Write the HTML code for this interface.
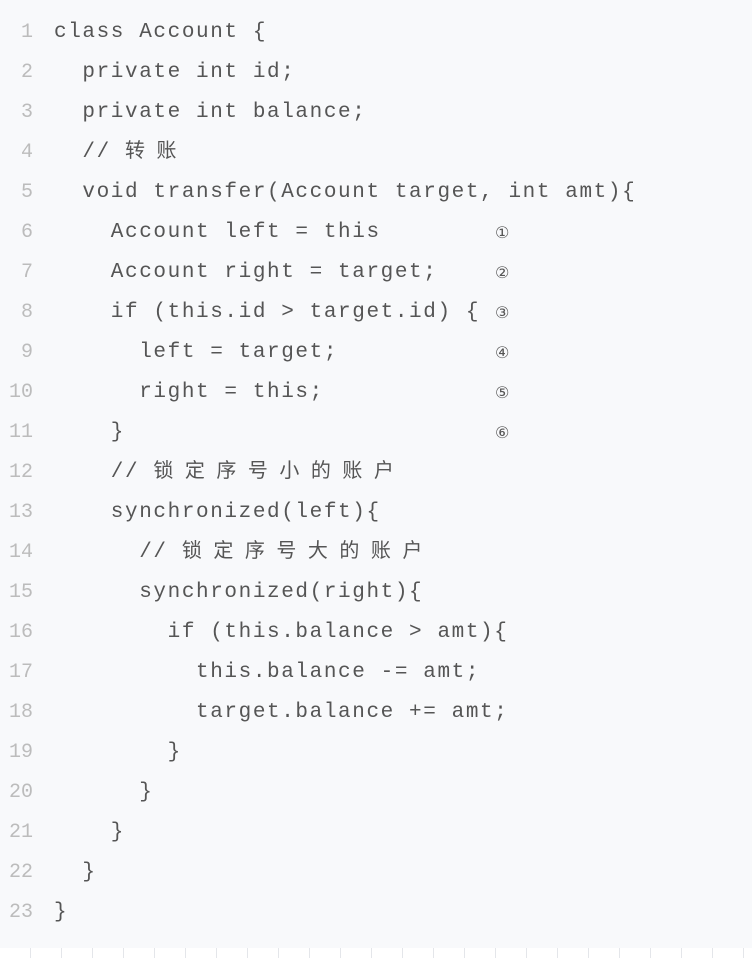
<!DOCTYPE html>
<html><head><meta charset="utf-8"><style>
html,body{margin:0;padding:0;width:752px;height:958px;overflow:hidden;background:#fff}
.box{position:absolute;left:0;top:0;width:752px;height:948px;background:#f8f9fb}
.ticks{position:absolute;left:0;top:948px;width:752px;height:10px;background:#fff;
background-image:repeating-linear-gradient(90deg,transparent 0,transparent 30px,#e4e6ea 30px,#e4e6ea 31px);}
.ln{position:absolute;left:0;width:33px;height:40px;line-height:40px;text-align:right;font:20px/40px "Liberation Mono",monospace;color:#bcbcbc;}
.c{position:absolute;left:54px;height:40px;white-space:pre;font:21px/40px "Liberation Mono",monospace;letter-spacing:1.6px;color:#555;}
.z{font-family:"Noto Sans CJK SC",sans-serif;font-size:20px;letter-spacing:11.5px;line-height:20px;vertical-align:baseline}
.m{position:absolute;left:495px;height:40px;font:16px/40px "DejaVu Sans",sans-serif;color:#555;}
</style></head><body>
<div class="box"></div><div class="ticks"></div>
<div id="w"></div>
<script>
var L=["class Account {","  private int id;","  private int balance;","  // <span class=z>转账</span>","  void transfer(Account target, int amt){","    Account left = this","    Account right = target;","    if (this.id &gt; target.id) {","      left = target;","      right = this;","    }","    // <span class=z>锁定序号小的账户</span>","    synchronized(left){","      // <span class=z>锁定序号大的账户</span>","      synchronized(right){","        if (this.balance &gt; amt){","          this.balance -= amt;","          target.balance += amt;","        }","      }","    }","  }","}"];
var M=["①","②","③","④","⑤","⑥"],h="";
for(var i=0;i<L.length;i++){var y=13+i*40;
h+='<div class="ln" style="top:'+y+'px">'+(i+1)+'</div><div class="c" style="top:'+y+'px">'+L[i]+'</div>';
if(i>=5&&i<=10)h+='<div class="m" style="top:'+y+'px">'+M[i-5]+'</div>';}
document.getElementById('w').innerHTML=h;
</script>
</body></html>
